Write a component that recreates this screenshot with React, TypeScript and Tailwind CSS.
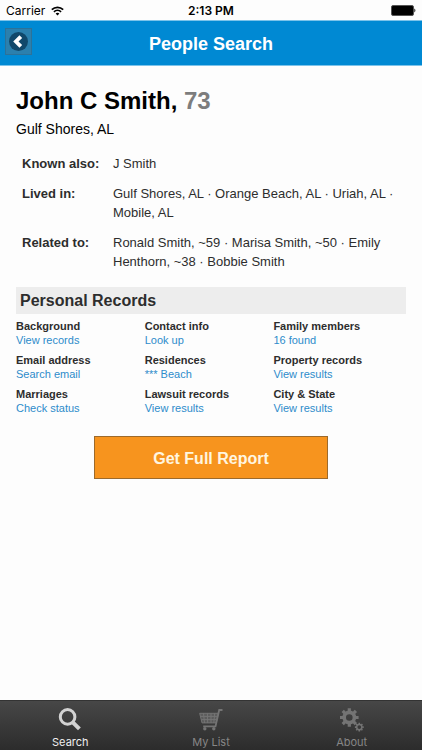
import { clsx } from "clsx";
import type { ReactNode } from "react";

const facts = [
  { label: "Known also:", value: "J Smith" },
  {
    label: "Lived in:",
    value: "Gulf Shores, AL · Orange Beach, AL · Uriah, AL · Mobile, AL",
  },
  {
    label: "Related to:",
    value: "Ronald Smith, ~59 · Marisa Smith, ~50 · Emily Henthorn, ~38 · Bobbie Smith",
  },
];

const records = [
  { title: "Background", action: "View records" },
  { title: "Contact info", action: "Look up" },
  { title: "Family members", action: "16 found" },
  { title: "Email address", action: "Search email" },
  { title: "Residences", action: "*** Beach" },
  { title: "Property records", action: "View results" },
  { title: "Marriages", action: "Check status" },
  { title: "Lawsuit records", action: "View results" },
  { title: "City & State", action: "View results" },
];

function StatusBar() {
  return (
    <div className="grid h-5 grid-cols-3 items-center px-1.5 font-[Inter,sans-serif] text-[12px] text-black">
      <div className="flex items-center gap-1.5 pt-0.5">
        <span>Carrier</span>
        <svg width="13" height="10" viewBox="0 0 13 10" fill="none" stroke="currentColor" aria-hidden="true">
          <path d="M0.8 3.6a8.2 8.2 0 0 1 11.4 0" strokeWidth="1.7" />
          <path d="M2.9 5.8a5.2 5.2 0 0 1 7.2 0" strokeWidth="1.6" />
          <path d="M6.5 9.5 4.6 7.6a2.7 2.7 0 0 1 3.8 0z" fill="currentColor" stroke="none" />
        </svg>
      </div>
      <span className="pt-0.5 text-center text-[12px] font-semibold">2:13 PM</span>
      <svg className="justify-self-end" width="25" height="11" viewBox="0 0 25 11" aria-hidden="true">
        <rect x="0.5" y="0.5" width="22" height="10" rx="1.5" fill="#000" stroke="#555" />
        <path d="M23.4 3.6c1.3.4 1.3 3.4 0 3.8z" fill="#000" />
      </svg>
    </div>
  );
}

function Header() {
  return (
    <header className="grid h-[46px] grid-cols-[27px_1fr_27px] items-start border-y border-[#7cc3ea] bg-[#0089d3] px-[5px] pt-[7px]">
      <button
        type="button"
        aria-label="Back"
        className="flex size-[27px] items-center justify-center border border-[#2c7299] bg-[#2b80ae]"
      >
        <svg width="21" height="21" viewBox="0 0 21 21" aria-hidden="true">
          <circle cx="10.5" cy="10.5" r="9.5" fill="#10486b" />
          <path d="M12.8 5.6 7.9 10.5l4.9 4.9" fill="none" stroke="#fff" strokeWidth="3.8" />
        </svg>
      </button>
      <h1 className="pt-0.5 text-center text-[18px] leading-[28px] font-bold text-white">People Search</h1>
    </header>
  );
}

function SearchIcon() {
  return (
    <svg width="24" height="24" viewBox="0 0 24 24" fill="none" stroke="currentColor" aria-hidden="true">
      <circle cx="9.6" cy="8.9" r="7.3" strokeWidth="3" />
      <path d="m14.8 14.3 6.6 6.6" strokeWidth="4" />
    </svg>
  );
}

function CartIcon() {
  return (
    <svg width="24" height="24" viewBox="0 0 24 24" fill="none" stroke="currentColor" aria-hidden="true">
      <path d="M0.7 5.3h18.6l-2.2 9.6H3z" fill="currentColor" fillOpacity="0.55" strokeWidth="1" />
      <path
        d="M4.5 5.3l1 9.6M8.4 5.3l.3 9.6M12 5.3v9.6M15.7 5.3l-.9 9.6M1.5 8.4h17M2.3 11.6h15.4"
        strokeWidth="1"
      />
      <path d="M23.5 2h-3.3l-3.7 16.4H4.2" strokeWidth="1.8" />
      <circle cx="5.8" cy="20.7" r="1.7" fill="currentColor" stroke="none" />
      <circle cx="14.8" cy="20.7" r="1.7" fill="currentColor" stroke="none" />
    </svg>
  );
}

function GearsIcon() {
  return (
    <svg width="24" height="24" viewBox="0 0 24 24" fill="none" stroke="currentColor" aria-hidden="true">
      <circle cx="9.3" cy="9.5" r="5.1" strokeWidth="3.6" />
      <path
        d="M9.3.2v3.4M9.3 15.4v3.4M0 9.5h3.4M15.2 9.5h3.4M2.7 2.9l2.4 2.4M13.5 13.7l2.4 2.4M15.9 2.9l-2.4 2.4M5.1 13.7l-2.4 2.4"
        strokeWidth="3.2"
      />
      <circle cx="19.3" cy="19.1" r="2.6" strokeWidth="1.5" />
      <path
        d="M19.3 14.7v1.4M19.3 22.1v1.4M14.9 19.1h1.4M22.3 19.1h1.4M16.2 16l1 1M21.4 21.2l1 1M22.4 16l-1 1M17.2 21.2l-1 1"
        strokeWidth="1.6"
      />
    </svg>
  );
}

type TabProps = {
  label: string;
  active?: boolean;
  children: ReactNode;
};

function Tab({ label, active, children }: TabProps) {
  return (
    <button
      type="button"
      aria-current={active ? "page" : undefined}
      className="flex flex-col items-center gap-[3px] pt-[7px]"
    >
      <span className={active ? "text-[#d2d2d2]" : "text-[#747474]"}>{children}</span>
      <span
        className={clsx(
          "font-[Inter,sans-serif] text-[11px] leading-[14px]",
          active ? "text-[#efefef]" : "text-[#868686]"
        )}
      >
        {label}
      </span>
    </button>
  );
}

export default function App() {
  return (
    <div className="flex min-h-screen flex-col bg-[#fdfdfd] font-['Liberation_Sans',Arial,sans-serif] text-[#2d2d2d]">
      <StatusBar />
      <Header />

      <main className="flex-1 px-4 pt-5">
        <h2 className="text-[24px] leading-[30px] font-bold text-black">
          John C Smith, <span className="text-[#7d7d7d]">73</span>
        </h2>
        <p className="text-[14px] leading-[26px] text-black">Gulf Shores, AL</p>

        <dl className="mt-3 grid grid-cols-[91px_1fr] gap-y-[11px] pl-1.5 text-[13px] leading-[19px]">
          {facts.map((fact) => (
            <div key={fact.label} className="contents">
              <dt className="font-bold">{fact.label}</dt>
              <dd>{fact.value}</dd>
            </div>
          ))}
        </dl>

        <h3 className="mt-4 bg-[#ededed] px-1 text-[16px] leading-[27px] font-bold">Personal Records</h3>
        <ul className="mt-[5px] grid grid-cols-[33%_33%_1fr] gap-y-1.5 text-[11px] leading-[14px]">
          {records.map((record) => (
            <li key={record.title}>
              <h4 className="font-bold">{record.title}</h4>
              <a href="#" className="block text-[#2d8ccb]">
                {record.action}
              </a>
            </li>
          ))}
        </ul>

        <button
          type="button"
          className="mx-auto mt-[21px] block h-[43px] w-3/5 border border-[#9c6a2c] bg-[#f7941e] pt-0.5 text-[16px] font-bold text-[#fff6e0]"
        >
          Get Full Report
        </button>
      </main>

      <nav className="grid h-[50px] grid-cols-3 border-t border-[#333] bg-linear-to-b from-[#474747] to-[#2c2c2c]">
        <Tab label="Search" active>
          <SearchIcon />
        </Tab>
        <Tab label="My List">
          <CartIcon />
        </Tab>
        <Tab label="About">
          <GearsIcon />
        </Tab>
      </nav>
    </div>
  );
}
